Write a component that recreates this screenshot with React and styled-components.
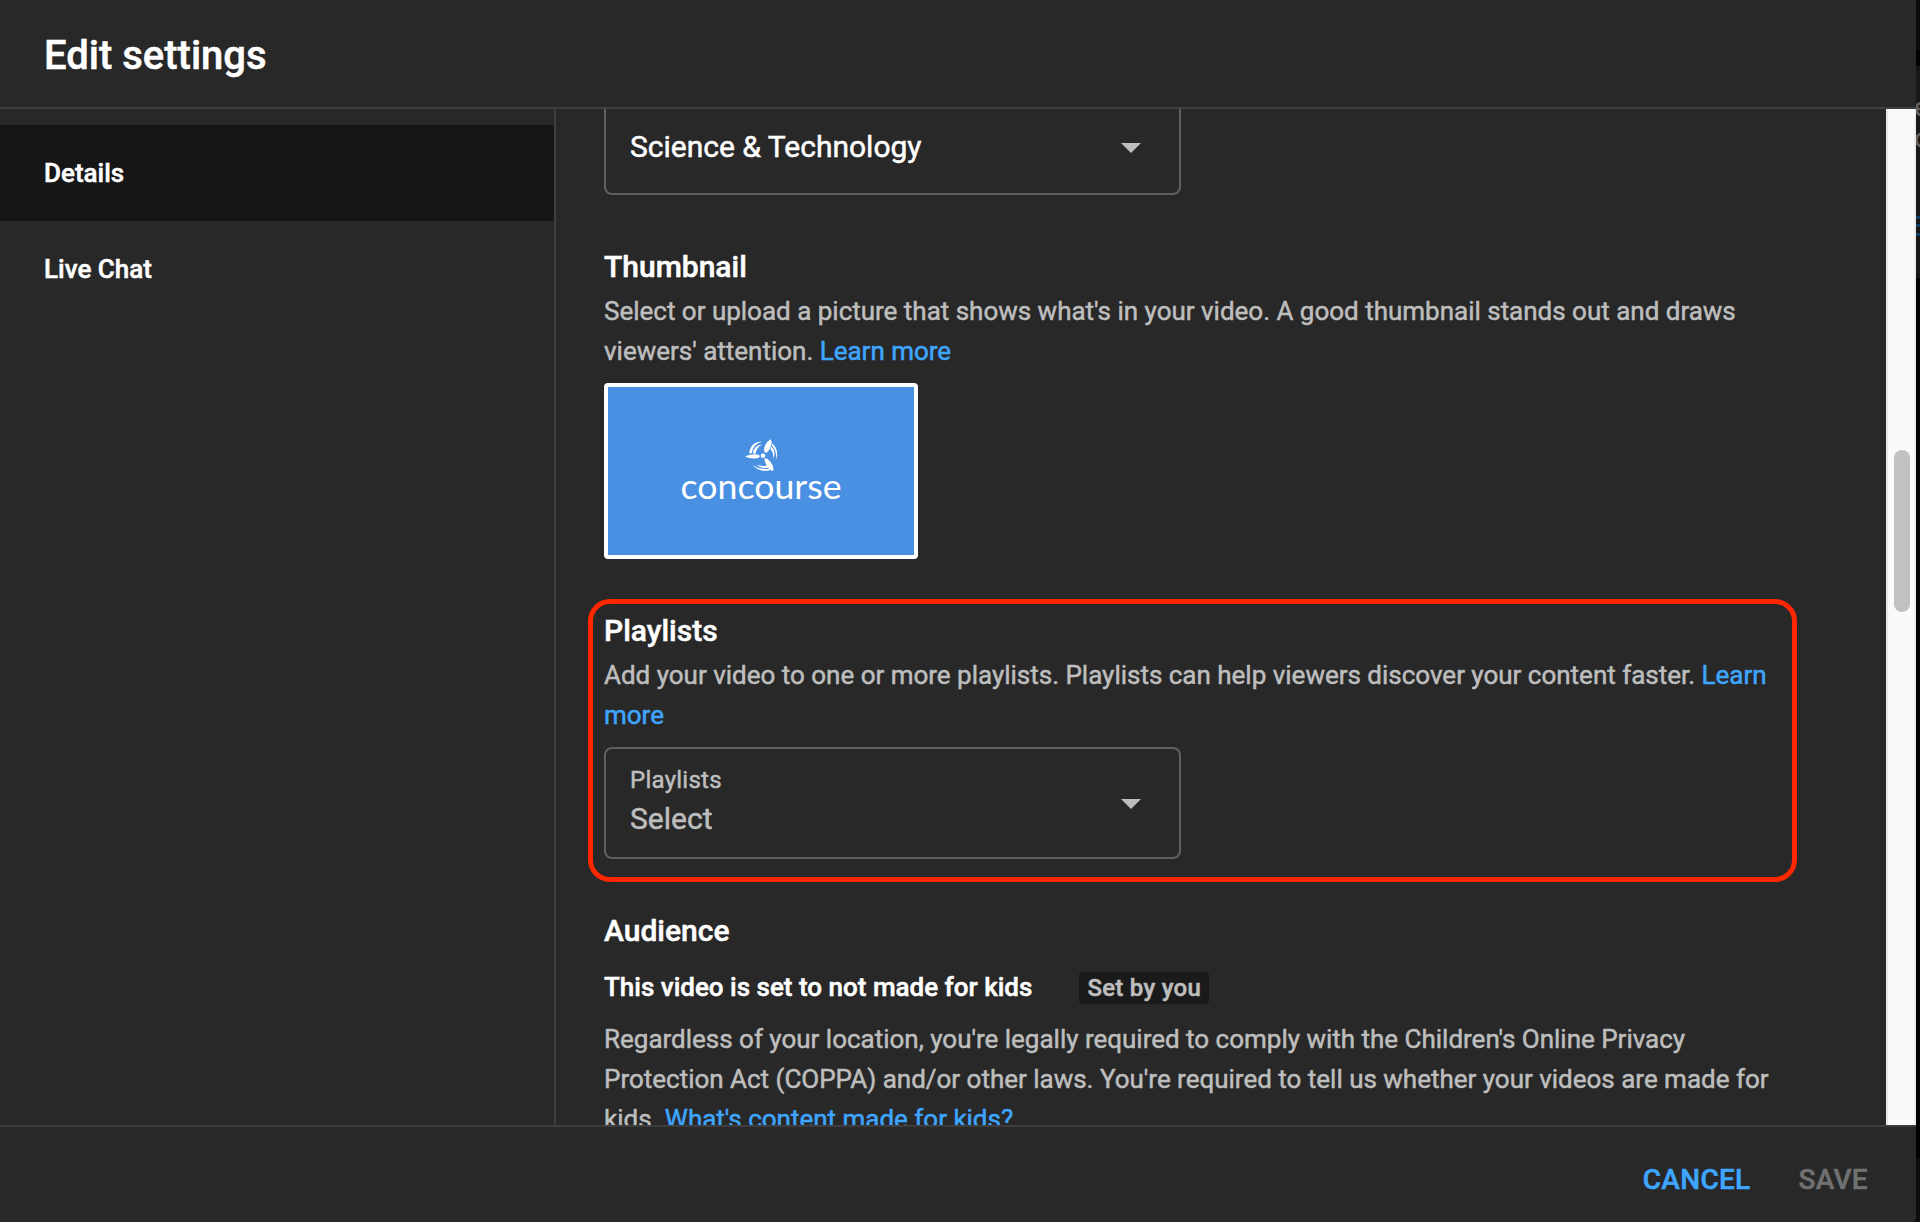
import React from 'react';
import styled, { createGlobalStyle } from 'styled-components';

const Global = createGlobalStyle`
  * { box-sizing: border-box; }
  body {
    margin: 0; background: #000; overflow: hidden; font-family: Roboto, "Liberation Sans", sans-serif;
    -webkit-text-stroke: 0.5px currentColor;
  }
`;
const Page = styled.div`display: flex; width: 1920px; height: 1222px; background: #0c0c0c;`;
const Dialog = styled.div`
  display: flex; flex-direction: column; width: 1916px; height: 1222px; flex: none;
  background: #282828; color: #fff; border-bottom-right-radius: 4px;
`;
const Backdrop = styled.div`
  flex: 1; min-width: 0; overflow: hidden; display: flex; flex-direction: column;
  background: linear-gradient(#0a0a0a 0 50px, #000 50px 66px, #181818 66px 278px, #000 278px 1158px, #0e0e0e 1158px);
  padding-top: 92px; color: #626262; font-size: 26px; line-height: 31px;
`;
const Peek = styled.span`height: 31px; margin-left: -2px;`;
const PeekLine = styled.i`height: 3px; margin-top: ${p => p.$mt}px; background: #123f66; flex: none;`;
const Header = styled.header`
  height: 109px; flex: none; display: flex; align-items: center; padding: 5px 44px 0; border-bottom: 2px solid #3e3e3e;
`;
const Title = styled.h1`margin: 0; font-size: 40px; line-height: 56px; font-weight: 500;`;
const Body = styled.div`display: flex; height: 1016px; flex: none;`;
const Sidebar = styled.nav`width: 556px; flex: none; padding-top: 16px; border-right: 2px solid #3e3e3e;`;
const NavItem = styled.div`
  height: 96px; display: flex; align-items: center; padding: 0 44px;
  font-size: 26px; font-weight: 500; background: ${p => (p.$active ? '#161616' : 'transparent')};
`;
const Content = styled.main`flex: 1; min-width: 0; height: 1016px; overflow: hidden; padding-left: 48px;`;
const Select = styled.div`
  width: 577px; height: ${p => p.$h}px; display: flex; align-items: center; justify-content: space-between;
  border: 2px solid #606060; border-radius: 8px; padding: 0 38px 0 24px; margin-top: ${p => p.$mt}px;
`;
const SelectText = styled.div`display: flex; flex-direction: column;`;
const SelectLabel = styled.span`
  font-size: 24px; line-height: 32px; height: 32px; padding-top: 1px; letter-spacing: 0.011em; color: #bebebe;
`;
const SelectValue = styled.span`font-size: 30px; line-height: 48px; color: ${p => (p.$muted ? '#bebebe' : '#fff')};`;
const Caret = styled.i`
  width: 0; height: 0; margin-top: 2px; border: 10px solid transparent; border-top-color: #bebebe; border-bottom: 0;
`;
const Heading = styled.h2`margin: ${p => p.$mt}px 0 0; font-size: 30px; line-height: 48px; font-weight: 500;`;
const Text = styled.p`
  margin: ${p => p.$mt || 0}px 0 0; width: 1176px; font-size: 26px; line-height: 40px; letter-spacing: -0.01px; color: #bebebe;
`;
const Link = styled.a`color: #3ea6ff;`;
const Thumb = styled.div`
  width: 314px; height: 176px; margin-top: 12px; border: 4px solid #fff; border-radius: 4px; background: #4990e2;
  svg { display: block; -webkit-text-stroke: 0; }
`;
const Highlight = styled.section`
  width: 1209px; height: 283px; margin: 40px 0 0 -16px; padding: 0 0 0 11px;
  border: 5px solid #ff2600; border-radius: 22px;
`;
const Status = styled.div`display: flex; align-items: center; margin-top: 12px; height: 40px;`;
const StatusText = styled.span`font-size: 26px; line-height: 40px; font-weight: 500;`;
const Badge = styled.span`
  margin: 1px 0 0 47px; height: 32px; padding: 0 8px; border-radius: 4px; background: #1a1a1a; color: #bebebe;
  font-size: 24px; line-height: 32px; font-weight: 500; letter-spacing: 0.011em;
`;
const ScrollTrack = styled.div`
  width: 30px; flex: none; background: #fafafa; border-left: 2px solid #e8e8e8; border-right: 2px solid #ededed; padding: 341px 0 0 6px;
`;
const ScrollThumb = styled.div`width: 16px; height: 162px; border-radius: 8px; background: #c1c1c1;`;
const Footer = styled.footer`
  flex: 1; display: flex; align-items: center; justify-content: flex-end; gap: 48px; padding: 10px 48px 0 0; border-top: 2px solid #3e3e3e;
`;
const Action = styled.button`
  border: 0; padding: 0; background: none; font-family: inherit; font-size: 28px; font-weight: 500; line-height: 36px;
  letter-spacing: 0.3px; text-transform: uppercase; color: ${p => (p.$disabled ? '#717171' : '#3ea6ff')};
`;

function ConcourseLogo() {
  return (
    <svg width="306" height="168" viewBox="0 0 306 168">
      <g fill="#fff">
        <circle cx="155" cy="68.7" r="2.3" />
        <path d="M137 69.4 Q142 67 147 67.2 Q151.8 67.5 151.8 69.2 Q151.8 71 147 71.5 Q141 71.8 137 69.4Z" />
        <path d="M162.8 52.2 Q164.6 55.5 162.6 60 Q160 65.8 157.8 65.8 Q155.4 65 156.4 60.5 Q158.2 54.5 162.8 52.2Z" />
        <path d="M156.6 71.4 Q158.8 70.4 162 74.2 Q166.2 79.6 165.2 84 Q161.3 83.6 158.4 78 Q156 72.8 156.6 71.4Z" />
      </g>
      <g fill="#fff">
        <path d="M141.2 66.2 Q142.6 54.6 154.2 54.4 Q145.4 56.8 143.6 66.2Z" />
        <path d="M144.8 66.6 Q146 58 154.4 57.6 Q148.4 60.4 147.8 66.6Z" />
        <path d="M164.4 56.6 Q172 63.4 167.6 74 Q169.6 64.6 164 58.4Z" />
        <path d="M163.4 59.4 Q168.8 64.4 165.4 72 Q165.8 65.8 162.4 62Z" />
        <path d="M162.4 83 Q151.4 86.2 144.2 77.6 Q151.8 83.4 161.4 81.4Z" />
        <path d="M160.8 80.8 Q153.6 82.6 148.4 77.6 Q153.8 80 159.4 78.4Z" />
      </g>
      <text
        x="72.5" y="111.5" fill="#fff" fontFamily="Lato, sans-serif" fontSize="35"
        textLength="161" lengthAdjust="spacingAndGlyphs"
      >
        concourse
      </text>
    </svg>
  );
}

export default function App() {
  return (
    <Page>
      <Global />
      <Dialog>
        <Header><Title>Edit settings</Title></Header>
        <Body>
          <Sidebar>
            <NavItem $active>Details</NavItem>
            <NavItem>Live Chat</NavItem>
          </Sidebar>
          <Content>
            <Select $mt={-10} $h={96}>
              <SelectValue>Science &amp; Technology</SelectValue>
              <Caret />
            </Select>
            <Heading $mt={48}>Thumbnail</Heading>
            <Text>
              Select or upload a picture that shows what's in your video. A good thumbnail stands out and draws
              viewers' attention. <Link>Learn more</Link>
            </Text>
            <Thumb><ConcourseLogo /></Thumb>
            <Highlight>
              <Heading $mt={3}>Playlists</Heading>
              <Text>
                Add your video to one or more playlists. Playlists can help viewers discover your content faster. <Link>Learn more</Link>
              </Text>
              <Select $mt={12} $h={112}>
                <SelectText>
                  <SelectLabel>Playlists</SelectLabel>
                  <SelectValue $muted>Select</SelectValue>
                </SelectText>
                <Caret />
              </Select>
            </Highlight>
            <Heading $mt={25}>Audience</Heading>
            <Status>
              <StatusText>This video is set to not made for kids</StatusText>
              <Badge>Set by you</Badge>
            </Status>
            <Text $mt={12}>
              Regardless of your location, you're legally required to comply with the Children's Online Privacy
              Protection Act (COPPA) and/or other laws. You're required to tell us whether your videos are made for
              kids. <Link>What's content made for kids?</Link>
            </Text>
          </Content>
          <ScrollTrack><ScrollThumb /></ScrollTrack>
        </Body>
        <Footer>
          <Action>Cancel</Action>
          <Action $disabled>Save</Action>
        </Footer>
      </Dialog>
      <Backdrop>
        <Peek>e</Peek>
        <Peek>o</Peek>
        <PeekLine $mt={62} />
        <PeekLine $mt={5} />
        <PeekLine $mt={6} />
      </Backdrop>
    </Page>
  );
}
